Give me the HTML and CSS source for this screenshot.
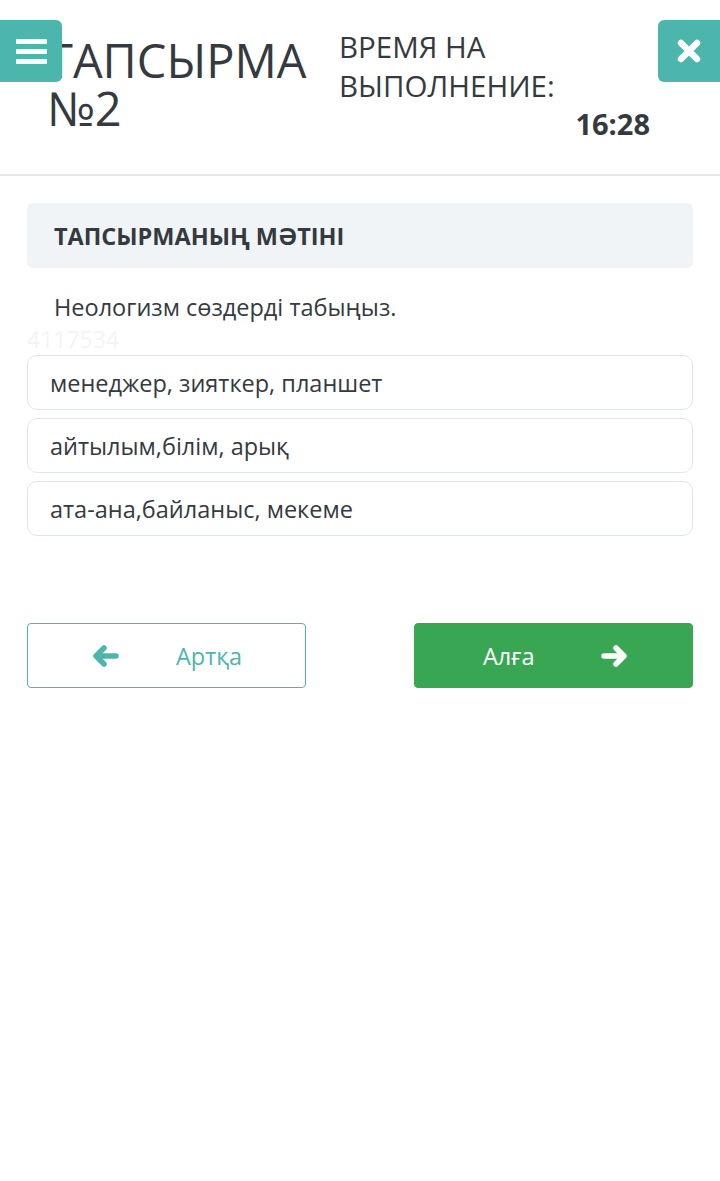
FILE: index.html
```html
<!DOCTYPE html>
<html lang="kk">
<head>
<meta charset="utf-8">
<title>Тапсырма №2</title>
<link rel="stylesheet" href="styles.css">
</head>
<body>
<header class="top">
  <button class="icon-btn menu-btn" aria-label="Меню">
    <span class="bar"></span><span class="bar"></span><span class="bar"></span>
  </button>
  <h1 class="task-title">ТАПСЫРМА<br>№2</h1>
  <div class="timer">
    <div class="timer-label">ВРЕМЯ НА<br>ВЫПОЛНЕНИЕ:</div>
    <div class="timer-value">16:28</div>
  </div>
  <button class="icon-btn close-btn" aria-label="Закрыть">
    <svg width="26" height="26" viewBox="0 0 26 26"><path d="M5 5 L21 21 M21 5 L5 21" stroke="#fff" stroke-width="6.5" stroke-linecap="round"/></svg>
  </button>
</header>
<main class="content">
  <div class="section-head">ТАПСЫРМАНЫҢ МӘТІНІ</div>
  <p class="question">Неологизм сөздерді табыңыз.</p>
  <div class="watermark">4117534</div>
  <ul class="options">
    <li class="option">менеджер, зияткер, планшет</li>
    <li class="option">айтылым,білім, арық</li>
    <li class="option">ата-ана,байланыс, мекеме</li>
  </ul>
  <div class="nav">
    <button class="nav-btn back">
      <svg class="arrow" width="26" height="22" viewBox="0 0 26 22"><path d="M11 3 L3 11 L11 19 M4 11 H23" fill="none" stroke="currentColor" stroke-width="5.5" stroke-linecap="round" stroke-linejoin="round"/></svg>
      <span>Артқа</span>
    </button>
    <button class="nav-btn next">
      <span>Алға</span>
      <svg class="arrow" width="26" height="22" viewBox="0 0 26 22"><path d="M15 3 L23 11 L15 19 M22 11 H3" fill="none" stroke="currentColor" stroke-width="5.5" stroke-linecap="round" stroke-linejoin="round"/></svg>
    </button>
  </div>
</main>
</body>
</html>
```
FILE: styles.css
```css
* { box-sizing: border-box; }
html, body { margin: 0; padding: 0; background: #fff; }
body {
  font-family: "Open Sans", "Noto Sans", sans-serif;
  color: #343a40;
  width: 720px;
  min-height: 1181px;
}
.top {
  position: relative;
  display: flex;
  align-items: flex-start;
  height: 176px;
  padding: 30px 70px 0 47px;
  border-bottom: 2px solid #e6e6e6;
}
.icon-btn {
  position: absolute;
  top: 20px;
  width: 62px;
  height: 62px;
  border: none;
  background: #4db6ac;
  display: flex;
  align-items: center;
  justify-content: center;
  padding: 0;
  z-index: 1;
}
.menu-btn { left: 0; border-radius: 0 6px 6px 0; flex-direction: column; gap: 5px; }
.menu-btn .bar { display: block; width: 31px; height: 5px; background: #fff; border-radius: 1px; }
.close-btn { right: 0; border-radius: 6px 0 0 6px; }
.task-title {
  margin: 6px 0 0 0;
  width: 292px;
  font-size: 47px;
  font-weight: 400;
  line-height: 48px;
  white-space: nowrap;
}
.timer {
  flex: 1;
}
.timer-label {
  font-size: 29.5px;
  line-height: 39px;
  margin-top: -3px;
}
.timer-value {
  text-align: right;
  font-size: 29px;
  font-weight: 700;
  line-height: 40px;
  margin-top: -1px;
}
.content { padding: 27px 27px 0 27px; }
.section-head {
  background: #f1f4f6;
  border-radius: 6px;
  height: 65px;
  display: flex;
  align-items: center;
  padding-left: 27px;
  font-size: 23.5px;
  font-weight: 700;
}
.question {
  margin: 21px 0 0 27px;
  font-size: 23.5px;
  line-height: 36px;
}
.watermark {
  color: #f4f4f4;
  font-size: 23px;
  line-height: 28px;
  height: 30px;
  margin-top: 0;
}
.options {
  list-style: none;
  margin: 0;
  padding: 0;
  display: flex;
  flex-direction: column;
  gap: 8px;
}
.option {
  height: 55px;
  border: 1px solid #dfe5e9;
  border-radius: 10px;
  display: flex;
  align-items: center;
  padding-left: 22px;
  font-size: 23.5px;
}
.nav {
  margin-top: 87px;
  display: flex;
  justify-content: space-between;
}
.nav-btn {
  width: 279px;
  height: 65px;
  border-radius: 4px;
  font-family: inherit;
  font-size: 23.5px;
  display: flex;
  align-items: center;
  padding: 0;
}
.nav-btn.back {
  background: #fff;
  border: 1px solid #4db6ac;
  color: #4db6ac;
  padding-left: 65px;
  gap: 57px;
}
.nav-btn.next {
  background: #38a652;
  border: 1px solid #38a652;
  color: #fff;
  padding-left: 68px;
  gap: 66px;
}
```
